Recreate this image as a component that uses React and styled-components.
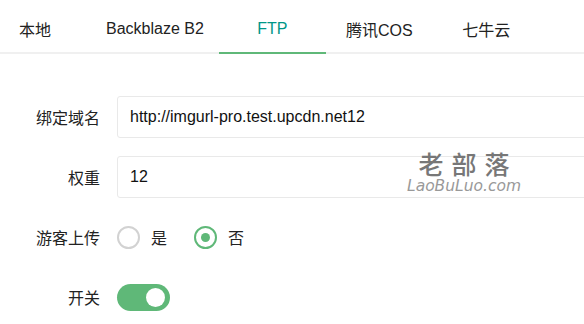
import React, { useState } from 'react';
import styled, { createGlobalStyle } from 'styled-components';

const GlobalStyle = createGlobalStyle`
  html, body {
    margin: 0;
    padding: 0;
    background: #fff;
    overflow: hidden;
  }
  body {
    font-family: "Liberation Sans", Arial, "Noto Sans CJK SC", sans-serif;
    color: #333;
  }
`;

const Page = styled.div`
  position: relative;
  width: 584px;
  height: 324px;
  overflow: hidden;
`;

const TabBar = styled.ul`
  display: flex;
  margin: 0;
  padding: 0;
  list-style: none;
  height: 52px;
  border-bottom: 2px solid #f0f0f0;
`;

const Tab = styled.li`
  position: relative;
  box-sizing: border-box;
  display: flex;
  align-items: center;
  justify-content: ${(p) => (p.first ? 'flex-start' : 'center')};
  min-width: ${(p) => (p.first ? '91px' : '107px')};
  padding: ${(p) => (p.first ? '6px 0 0 19px' : '6px 15px 0')};
  font-size: 16px;
  color: ${(p) => (p.active ? '#009688' : '#222')};
  cursor: pointer;
  white-space: nowrap;

  &::after {
    content: '';
    display: ${(p) => (p.active ? 'block' : 'none')};
    position: absolute;
    left: 0;
    right: 0;
    bottom: -2px;
    height: 2px;
    background: #5fb878;
  }
`;

const Form = styled.div`
  display: flex;
  flex-direction: column;
  gap: 18px;
  padding-top: 42px;
`;

const Row = styled.div`
  display: flex;
  align-items: center;
  height: 42px;
`;

const Label = styled.label`
  width: 100px;
  flex-shrink: 0;
  text-align: right;
  font-size: 16px;
  color: #222;
  margin-right: 17px;
`;

const Input = styled.input`
  box-sizing: border-box;
  height: 42px;
  width: 500px;
  flex-shrink: 0;
  border: 1px solid #e9e9e9;
  border-radius: 3px;
  padding: 0 12px;
  font-family: "Liberation Sans", Arial, sans-serif;
  font-size: 16px;
  color: #111;
  outline: none;
`;

const RadioGroup = styled.div`
  display: flex;
  align-items: center;
  gap: 27px;
`;

const RadioItem = styled.span`
  display: flex;
  align-items: center;
  gap: 11px;
  font-size: 16px;
  color: #222;
  cursor: pointer;
`;

const Circle = styled.span`
  box-sizing: border-box;
  width: 23px;
  height: 23px;
  border-radius: 50%;
  border: 2px solid ${(p) => (p.checked ? '#5fb878' : '#d2d2d2')};
  display: flex;
  align-items: center;
  justify-content: center;

  &::before {
    content: '';
    display: ${(p) => (p.checked ? 'block' : 'none')};
    width: 9px;
    height: 9px;
    border-radius: 50%;
    background: #5fb878;
  }
`;

const Switch = styled.span`
  box-sizing: border-box;
  display: flex;
  align-items: center;
  justify-content: ${(p) => (p.on ? 'flex-end' : 'flex-start')};
  width: 53px;
  height: 27px;
  padding: 0 5px;
  border-radius: 14px;
  background: ${(p) => (p.on ? '#5fb878' : '#d2d2d2')};
  cursor: pointer;
`;

const Knob = styled.span`
  width: 19px;
  height: 19px;
  border-radius: 50%;
  background: #fff;
`;

const Watermark = styled.div`
  position: absolute;
  left: 407px;
  top: 150px;
  display: flex;
  flex-direction: column;
  align-items: center;
  gap: 2px;
  color: #777;
  pointer-events: none;
`;

const MarkTitle = styled.div`
  font-family: "Noto Sans CJK SC", serif;
  font-size: 25px;
  font-weight: 500;
  letter-spacing: 8px;
  line-height: 27px;
  padding-left: 8px;
`;

const MarkSite = styled.div`
  font-family: "DejaVu Sans", sans-serif;
  font-style: italic;
  font-weight: 200;
  font-size: 15.5px;
  line-height: 15px;
  color: #999;
`;

const tabs = ['本地', 'Backblaze B2', 'FTP', '腾讯COS', '七牛云'];

export default function App() {
  const [active, setActive] = useState(2);
  const [guest, setGuest] = useState(false);
  const [on, setOn] = useState(true);

  return (
    <Page>
      <GlobalStyle />
      <TabBar>
        {tabs.map((t, i) => (
          <Tab key={t} first={i === 0} active={i === active} onClick={() => setActive(i)}>
            {t}
          </Tab>
        ))}
      </TabBar>
      <Form>
        <Row>
          <Label>绑定域名</Label>
          <Input defaultValue="http://imgurl-pro.test.upcdn.net12" />
        </Row>
        <Row>
          <Label>权重</Label>
          <Input defaultValue="12" />
        </Row>
        <Row>
          <Label>游客上传</Label>
          <RadioGroup>
            <RadioItem onClick={() => setGuest(true)}>
              <Circle checked={guest} />是
            </RadioItem>
            <RadioItem onClick={() => setGuest(false)}>
              <Circle checked={!guest} />否
            </RadioItem>
          </RadioGroup>
        </Row>
        <Row>
          <Label>开关</Label>
          <Switch on={on} onClick={() => setOn(!on)}>
            <Knob />
          </Switch>
        </Row>
      </Form>
      <Watermark>
        <MarkTitle>老部落</MarkTitle>
        <MarkSite>LaoBuLuo.com</MarkSite>
      </Watermark>
    </Page>
  );
}
